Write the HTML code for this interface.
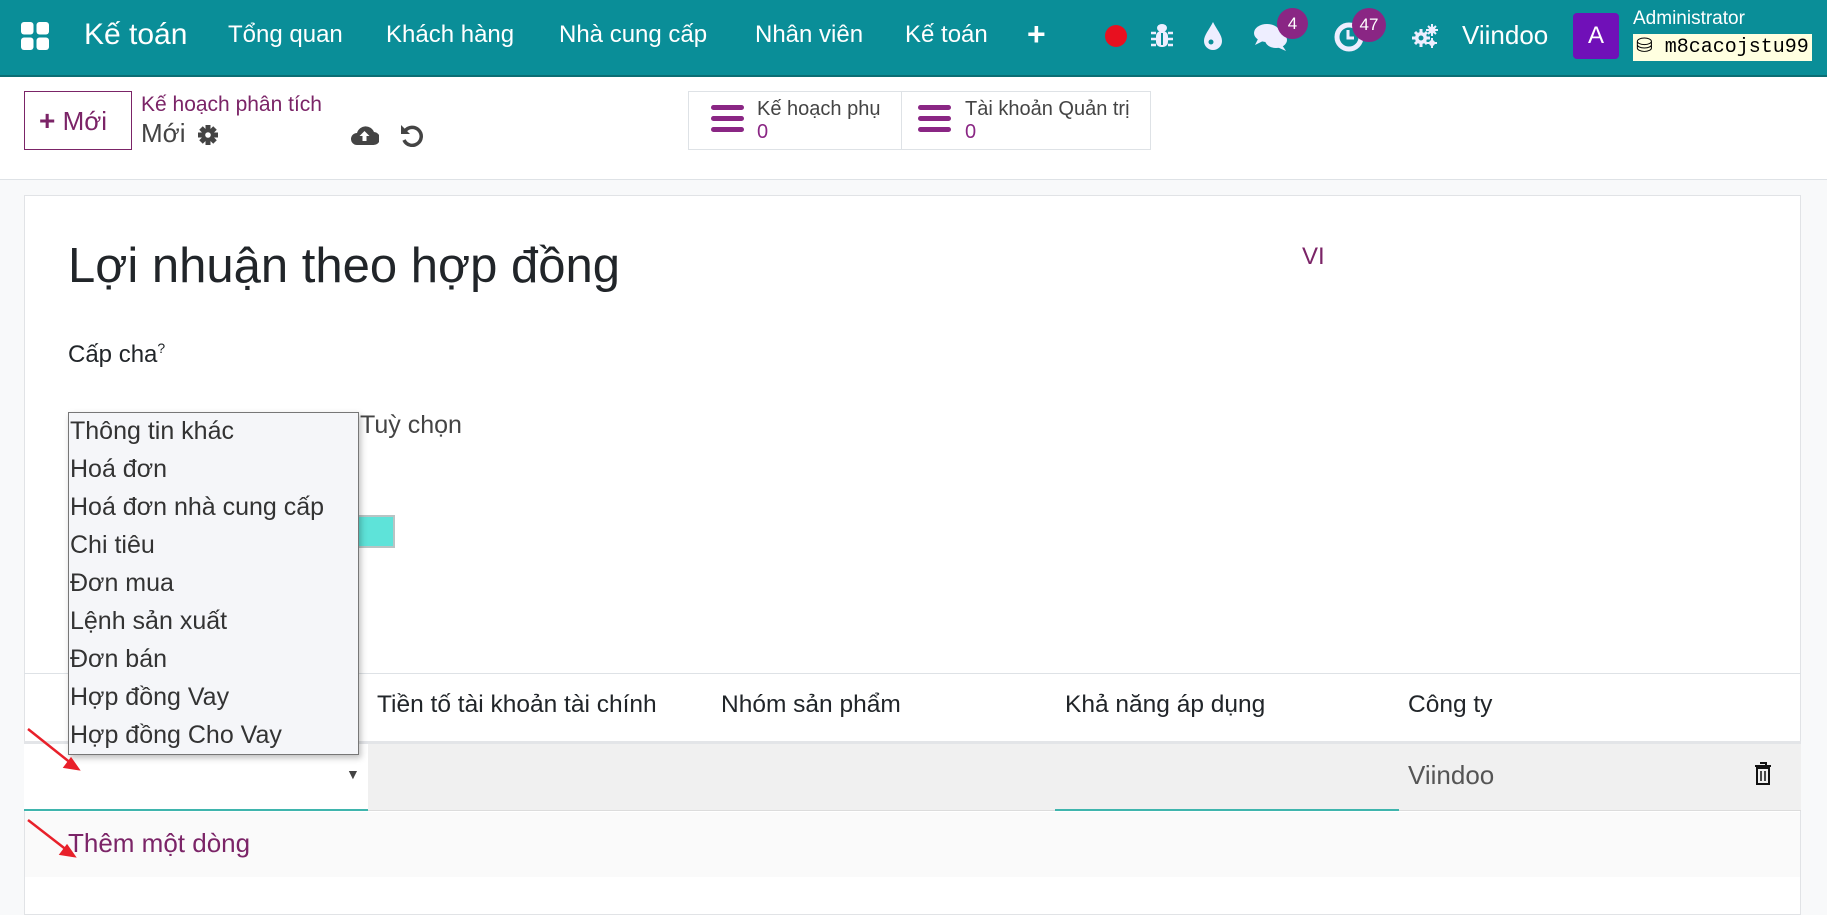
<!DOCTYPE html>
<html><head><meta charset="utf-8"><style>
*{box-sizing:border-box;margin:0;padding:0}
body{width:1827px;height:877px;overflow:hidden;background:#f8f9fa;font-family:"Liberation Sans","Noto Sans CJK SC",sans-serif;position:relative;color:#212529}
.a{position:absolute;white-space:nowrap}
.nav{position:absolute;left:0;top:0;width:1827px;height:77px;background:#0a8e98;border-bottom:2px solid #0b6e74}
.nav .t{position:absolute;color:#fff;font-size:24px;top:21px}
.cp{position:absolute;left:0;top:77px;width:1827px;height:103px;background:#fff;border-bottom:1px solid #dee2e6}
.sheet{position:absolute;left:24px;top:195px;width:1777px;height:720px;background:#fff;border:1px solid #e1e3e6}
.badge{position:absolute;background:#8a2684;color:#fff;border-radius:50%;font-size:17px;text-align:center}
.dd{position:absolute;left:68px;top:412px;width:291px;height:343px;background:#f5f6f9;border:1px solid #777;box-shadow:2px 3px 6px rgba(0,0,0,.25);font-size:25px;color:#333}
.dd div{position:absolute;left:1px}
.th{position:absolute;top:691px;font-size:24.5px;color:#212529}
</style></head><body>
<div class="nav">
  <svg class="a" style="left:21px;top:22px" width="28" height="28" viewBox="0 0 28 28" fill="#fff"><rect x="0" y="0" width="12.5" height="12.5" rx="3"/><rect x="15.5" y="0" width="12.5" height="12.5" rx="3"/><rect x="0" y="15.5" width="12.5" height="12.5" rx="3"/><rect x="15.5" y="15.5" width="12.5" height="12.5" rx="3"/></svg>
  <div class="t" style="left:84px;top:18px;font-size:30px">Kế toán</div>
  <div class="t" style="left:228px">Tổng quan</div>
  <div class="t" style="left:386px">Khách hàng</div>
  <div class="t" style="left:559px">Nhà cung cấp</div>
  <div class="t" style="left:755px">Nhân viên</div>
  <div class="t" style="left:905px">Kế toán</div>
  <div class="t" style="left:1027px;top:16px;font-size:32px;font-weight:bold">+</div>
  <div class="a" style="left:1105px;top:25px;width:22px;height:22px;border-radius:50%;background:#e8101f"></div>
  <svg class="a" style="left:1150px;top:23px" width="24" height="26" viewBox="0 0 24 26" fill="#eef"><ellipse cx="12" cy="5" rx="5" ry="4"/><rect x="6" y="8" width="12" height="16" rx="5"/><path d="M1 10h5M1 16h5M1 22h5M18 10h5M18 16h5M18 22h5" stroke="#eef" stroke-width="2.5"/><rect x="11" y="10" width="2" height="12" fill="#0a8e98"/></svg>
  <svg class="a" style="left:1203px;top:22px" width="20" height="28" viewBox="0 0 20 28"><path d="M10 0C6 8 1 13 1 19a9 9 0 0018 0C19 13 14 8 10 0z" fill="#eef"/><circle cx="8" cy="20" r="2.5" fill="#0a8e98"/></svg>
  <svg class="a" style="left:1254px;top:22px" width="34" height="30" viewBox="0 0 34 30" fill="#eef"><ellipse cx="13" cy="11" rx="13" ry="9"/><path d="M4 17l-3 6 8-4z"/><ellipse cx="22" cy="18" rx="11" ry="8"/><path d="M28 23l4 6-9-4z"/></svg>
  <div class="badge" style="left:1277px;top:8px;width:31px;height:31px;line-height:31px">4</div>
  <svg class="a" style="left:1334px;top:22px" width="30" height="30" viewBox="0 0 30 30"><circle cx="15" cy="15" r="12" fill="none" stroke="#eef" stroke-width="5"/><path d="M14 8v8h6" fill="none" stroke="#eef" stroke-width="3"/></svg>
  <div class="badge" style="left:1352px;top:8px;width:34px;height:34px;line-height:34px">47</div>
  <svg class="a" style="left:1412px;top:24px" width="26" height="24" viewBox="0 0 26 24" fill="#eef"><circle cx="9" cy="14" r="6"/><g stroke="#eef" stroke-width="3"><path d="M9 5v18M0 14h18M3 8l12 12M15 8L3 20"/></g><circle cx="9" cy="14" r="2.5" fill="#0a8e98"/><circle cx="20" cy="6" r="3.5"/><g stroke="#eef" stroke-width="2"><path d="M20 0v12M14 6h12M16 2l8 8M24 2l-8 8"/></g><circle cx="20" cy="19" r="3"/><g stroke="#eef" stroke-width="2"><path d="M20 14v10M15 19h10"/></g></svg>
  <div class="t" style="left:1462px;font-size:26px;top:20px">Viindoo</div>
  <div class="a" style="left:1573px;top:13px;width:46px;height:46px;background:#7010b8;border-radius:4px;color:#fff;font-size:24px;text-align:center;line-height:46px">A</div>
  <div class="a" style="left:1633px;top:8px;color:#fff;font-size:19px">Administrator</div>
  <div class="a" style="left:1633px;top:34px;width:179px;height:27px;background:#ffffe0;font-family:'Liberation Mono',monospace;font-size:20px;line-height:27px;padding-left:3px;color:#000">⛁ m8cacojstu99</div>
</div>
<div class="cp">
  <div class="a" style="left:24px;top:14px;width:108px;height:59px;border:1px solid #7b2467;color:#7b2467;font-size:26px;line-height:57px;padding-left:14px"><b style="font-size:28px">+</b> Mới</div>
  <div class="a" style="left:141px;top:16px;color:#7b2467;font-size:21px">Kế hoạch phân tích</div>
  <div class="a" style="left:141px;top:41px;color:#444;font-size:26px">Mới</div>
  <svg class="a" style="left:197px;top:47px" width="22" height="22" viewBox="0 0 22 22"><g stroke="#444" stroke-width="5"><path d="M11 1v20M1 11h20M4 4l14 14M18 4L4 18"/></g><circle cx="11" cy="11" r="6.5" fill="#444"/><circle cx="11" cy="11" r="2.8" fill="#fff"/></svg>
  <svg class="a" style="left:350px;top:47px" width="29" height="22" viewBox="0 0 29 22"><path d="M7 21a6 6 0 010-12 9 9 0 0117-1 6.5 6.5 0 01-1 13z" fill="#444"/><path d="M14.5 7l-5 5h3v5h4v-5h3z" fill="#fff"/></svg>
  <svg class="a" style="left:400px;top:46px" width="24" height="24" viewBox="0 0 24 24"><path d="M5 8a9 9 0 11-1 9" fill="none" stroke="#444" stroke-width="3.5"/><path d="M1 2v9h9z" fill="#444"/></svg>
  <div class="a" style="left:688px;top:14px;width:214px;height:59px;border:1px solid #dee2e6"></div>
  <div class="a" style="left:901px;top:14px;width:250px;height:59px;border:1px solid #dee2e6"></div>
  <svg class="a" style="left:711px;top:105px;position:fixed" width="33" height="28" viewBox="0 0 33 28" fill="#8a2684"><rect y="0" width="33" height="5" rx="2.5"/><rect y="11" width="33" height="5" rx="2.5"/><rect y="22" width="33" height="5" rx="2.5"/></svg>
  <svg class="a" style="left:918px;top:105px;position:fixed" width="33" height="28" viewBox="0 0 33 28" fill="#8a2684"><rect y="0" width="33" height="5" rx="2.5"/><rect y="11" width="33" height="5" rx="2.5"/><rect y="22" width="33" height="5" rx="2.5"/></svg>
  <div class="a" style="left:757px;top:21px;font-size:20px;color:#444">Kế hoạch phụ</div>
  <div class="a" style="left:757px;top:44px;font-size:20px;color:#8a2684">0</div>
  <div class="a" style="left:965px;top:21px;font-size:20px;color:#444">Tài khoản Quản trị</div>
  <div class="a" style="left:965px;top:44px;font-size:20px;color:#8a2684">0</div>
</div>
<div class="sheet"></div>
<div class="a" style="left:68px;top:238px;font-size:49px;color:#212529">Lợi nhuận theo hợp đồng</div>
<div class="a" style="left:1302px;top:243px;font-size:24px;color:#7b2467">VI</div>
<div class="a" style="left:68px;top:340px;font-size:24px">Cấp cha<sup style="font-size:14px">?</sup></div>
<div class="a" style="left:360px;top:411px;font-size:25px;color:#444">Tuỳ chọn</div>
<div class="a" style="left:355px;top:515px;width:40px;height:33px;background:#5ee3d9;border:2px solid #b8c4c4"></div>
<div class="a" style="left:24px;top:673px;width:1777px;height:1px;background:#dee2e6"></div>
<div class="th" style="left:377px">Tiền tố tài khoản tài chính</div>
<div class="th" style="left:721px">Nhóm sản phẩm</div>
<div class="th" style="left:1065px">Khả năng áp dụng</div>
<div class="th" style="left:1408px">Công ty</div>
<div class="a" style="left:24px;top:741px;width:1777px;height:3px;background:#e3e5e8"></div>
<div class="a" style="left:24px;top:744px;width:1777px;height:67px;background:#f0f0f0;border-bottom:1px solid #dcdcdc"></div>
<div class="a" style="left:24px;top:744px;width:344px;height:67px;background:#fff;border-bottom:2px solid #3fb5ad"></div>
<div class="a" style="left:1055px;top:809px;width:344px;height:2px;background:#3fb5ad"></div>
<div class="a" style="left:346px;top:766px;font-size:14px;color:#444">▼</div>
<div class="a" style="left:1408px;top:760px;font-size:26px;color:#555">Viindoo</div>
<svg class="a" style="left:1754px;top:762px" width="18" height="24" viewBox="0 0 18 24"><path d="M6 1h6v3M1 4h16M3 6h12v16H3z" fill="none" stroke="#111" stroke-width="2"/><path d="M7 9v10M11 9v10" stroke="#111" stroke-width="1.5"/></svg>
<div class="a" style="left:25px;top:812px;width:1775px;height:65px;background:#fafafa"></div>
<div class="a" style="left:68px;top:828px;font-size:26px;color:#7b2467">Thêm một dòng</div>
<div class="dd">
  <div style="top:4px">Thông tin khác</div>
  <div style="top:42px">Hoá đơn</div>
  <div style="top:80px">Hoá đơn nhà cung cấp</div>
  <div style="top:118px">Chi tiêu</div>
  <div style="top:156px">Đơn mua</div>
  <div style="top:194px">Lệnh sản xuất</div>
  <div style="top:232px">Đơn bán</div>
  <div style="top:270px">Hợp đồng Vay</div>
  <div style="top:308px">Hợp đồng Cho Vay</div>
</div>
<svg class="a" style="left:0;top:0" width="1827" height="877"><g stroke="#e8202a" stroke-width="2.5" fill="#e8202a"><line x1="28" y1="729" x2="72" y2="764"/><path d="M78 769l-13-2 6-8z"/><line x1="28" y1="820" x2="68" y2="851"/><path d="M74 856l-13-2 6-8z"/></g></svg>
</body></html>
